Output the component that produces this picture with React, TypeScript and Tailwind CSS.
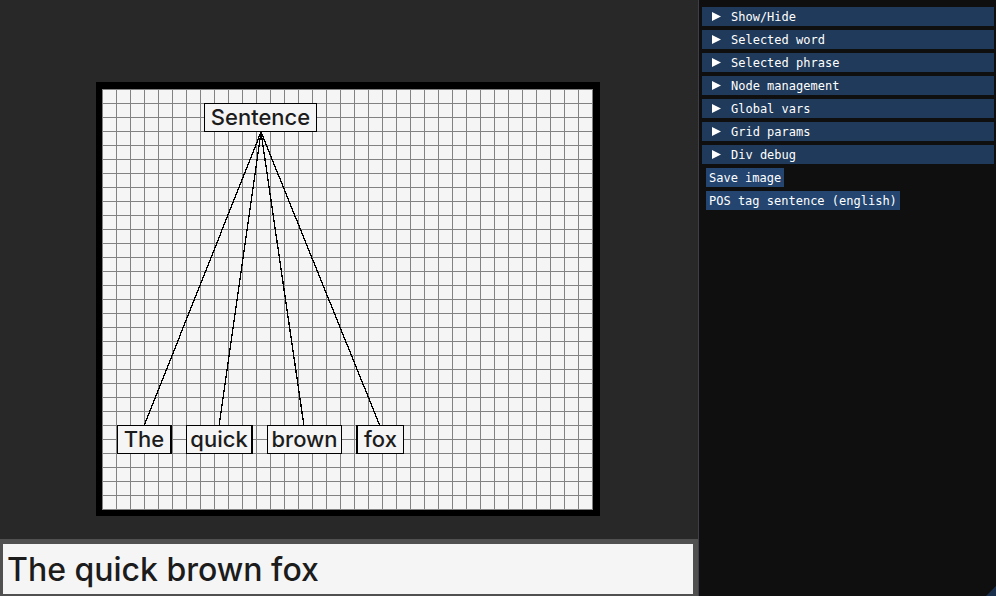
import { useState } from "react";

const sections = [
  "Show/Hide",
  "Selected word",
  "Selected phrase",
  "Node management",
  "Global vars",
  "Grid params",
  "Div debug",
];

// Node boxes in grid-canvas coordinates.
const nodes = [
  { label: "Sentence", place: "left-[102px] top-[14px] w-[113px]" },
  { label: "The", place: "left-[15px] top-[336px] w-[55px] border-r-2" },
  { label: "quick", place: "left-[84px] top-[336px] w-[67px] border-r-2" },
  { label: "brown", place: "left-[165px] top-[336px] w-[75px]" },
  { label: "fox", place: "left-[254px] top-[336px] w-[48px] border-l-2" },
];

const childAnchors = [42, 117, 202, 278];

function TreeCanvas() {
  return (
    <div className="border-6 border-t-7 border-r-7 border-black">
      <div className="relative h-[421px] w-[491px] bg-[#f5f5f5] bg-[linear-gradient(to_right,#828282_1px,transparent_1px),linear-gradient(to_bottom,#828282_1px,transparent_1px)] bg-[size:14px_14px]">
        <svg
          className="absolute inset-0 size-full"
          viewBox="0 0 491 421"
          stroke="#000"
          strokeWidth="1.3"
          shapeRendering="crispEdges"
          aria-hidden="true"
        >
          {childAnchors.map((x) => (
            <line key={x} x1="159" y1="43" x2={x} y2="337" />
          ))}
        </svg>
        {nodes.map((node) => (
          <button
            key={node.label}
            type="button"
            className={`absolute flex h-[29px] items-center justify-center border border-black bg-[#f5f5f5] pb-0.5 text-[22px] leading-none font-medium text-[#1c1c1c] ${node.place}`}
          >
            {node.label}
          </button>
        ))}
      </div>
    </div>
  );
}

function SidePanel() {
  return (
    <aside className="relative w-[298px] shrink-0 border-l border-[#3e3e46] bg-[#0f0f0f] py-[7px] pr-0.5 pl-[3px] font-['DejaVu_Sans_Mono',monospace] text-xs text-white">
      <div className="flex flex-col gap-1">
        {sections.map((title) => (
          <button
            key={title}
            type="button"
            aria-expanded="false"
            className="flex h-[19px] items-center gap-2.5 bg-[#1f3a5a] pl-2.5 text-left leading-none"
          >
            <svg className="size-[9px]" viewBox="0 0 9 9" fill="#fff" aria-hidden="true">
              <path d="M0 0 9 4.5 0 9Z" />
            </svg>
            {title}
          </button>
        ))}
      </div>
      <div className="mt-1 flex flex-col items-start gap-1 pl-1">
        <button type="button" className="h-[19px] bg-[#23456f] px-[3px] leading-none">
          Save image
        </button>
        <button type="button" className="h-[19px] bg-[#23456f] px-[3px] leading-none">
          POS tag sentence (english)
        </button>
      </div>
      <svg
        className="absolute right-0 bottom-0 size-2.5"
        viewBox="0 0 10 10"
        fill="#1a2f4b"
        aria-hidden="true"
      >
        <path d="M10 0V10H0Z" />
      </svg>
    </aside>
  );
}

export default function App() {
  const [sentence, setSentence] = useState("The quick brown fox");

  return (
    <div className="flex h-screen bg-[#282828] font-['Inter',sans-serif]">
      <main className="flex min-w-0 flex-1 flex-col">
        <div className="flex flex-1 flex-col items-center justify-end pr-0.5 pb-[23px]">
          <TreeCanvas />
        </div>
        <div className="border-t-5 border-r-5 border-b-2 border-l-3 border-[#505050]">
          <input
            aria-label="Sentence"
            value={sentence}
            onChange={(event) => setSentence(event.target.value)}
            className="block h-[50px] w-full bg-[#f5f5f5] px-1 text-[32px] font-medium text-[#1c1c1c] outline-none"
          />
        </div>
      </main>
      <SidePanel />
    </div>
  );
}
